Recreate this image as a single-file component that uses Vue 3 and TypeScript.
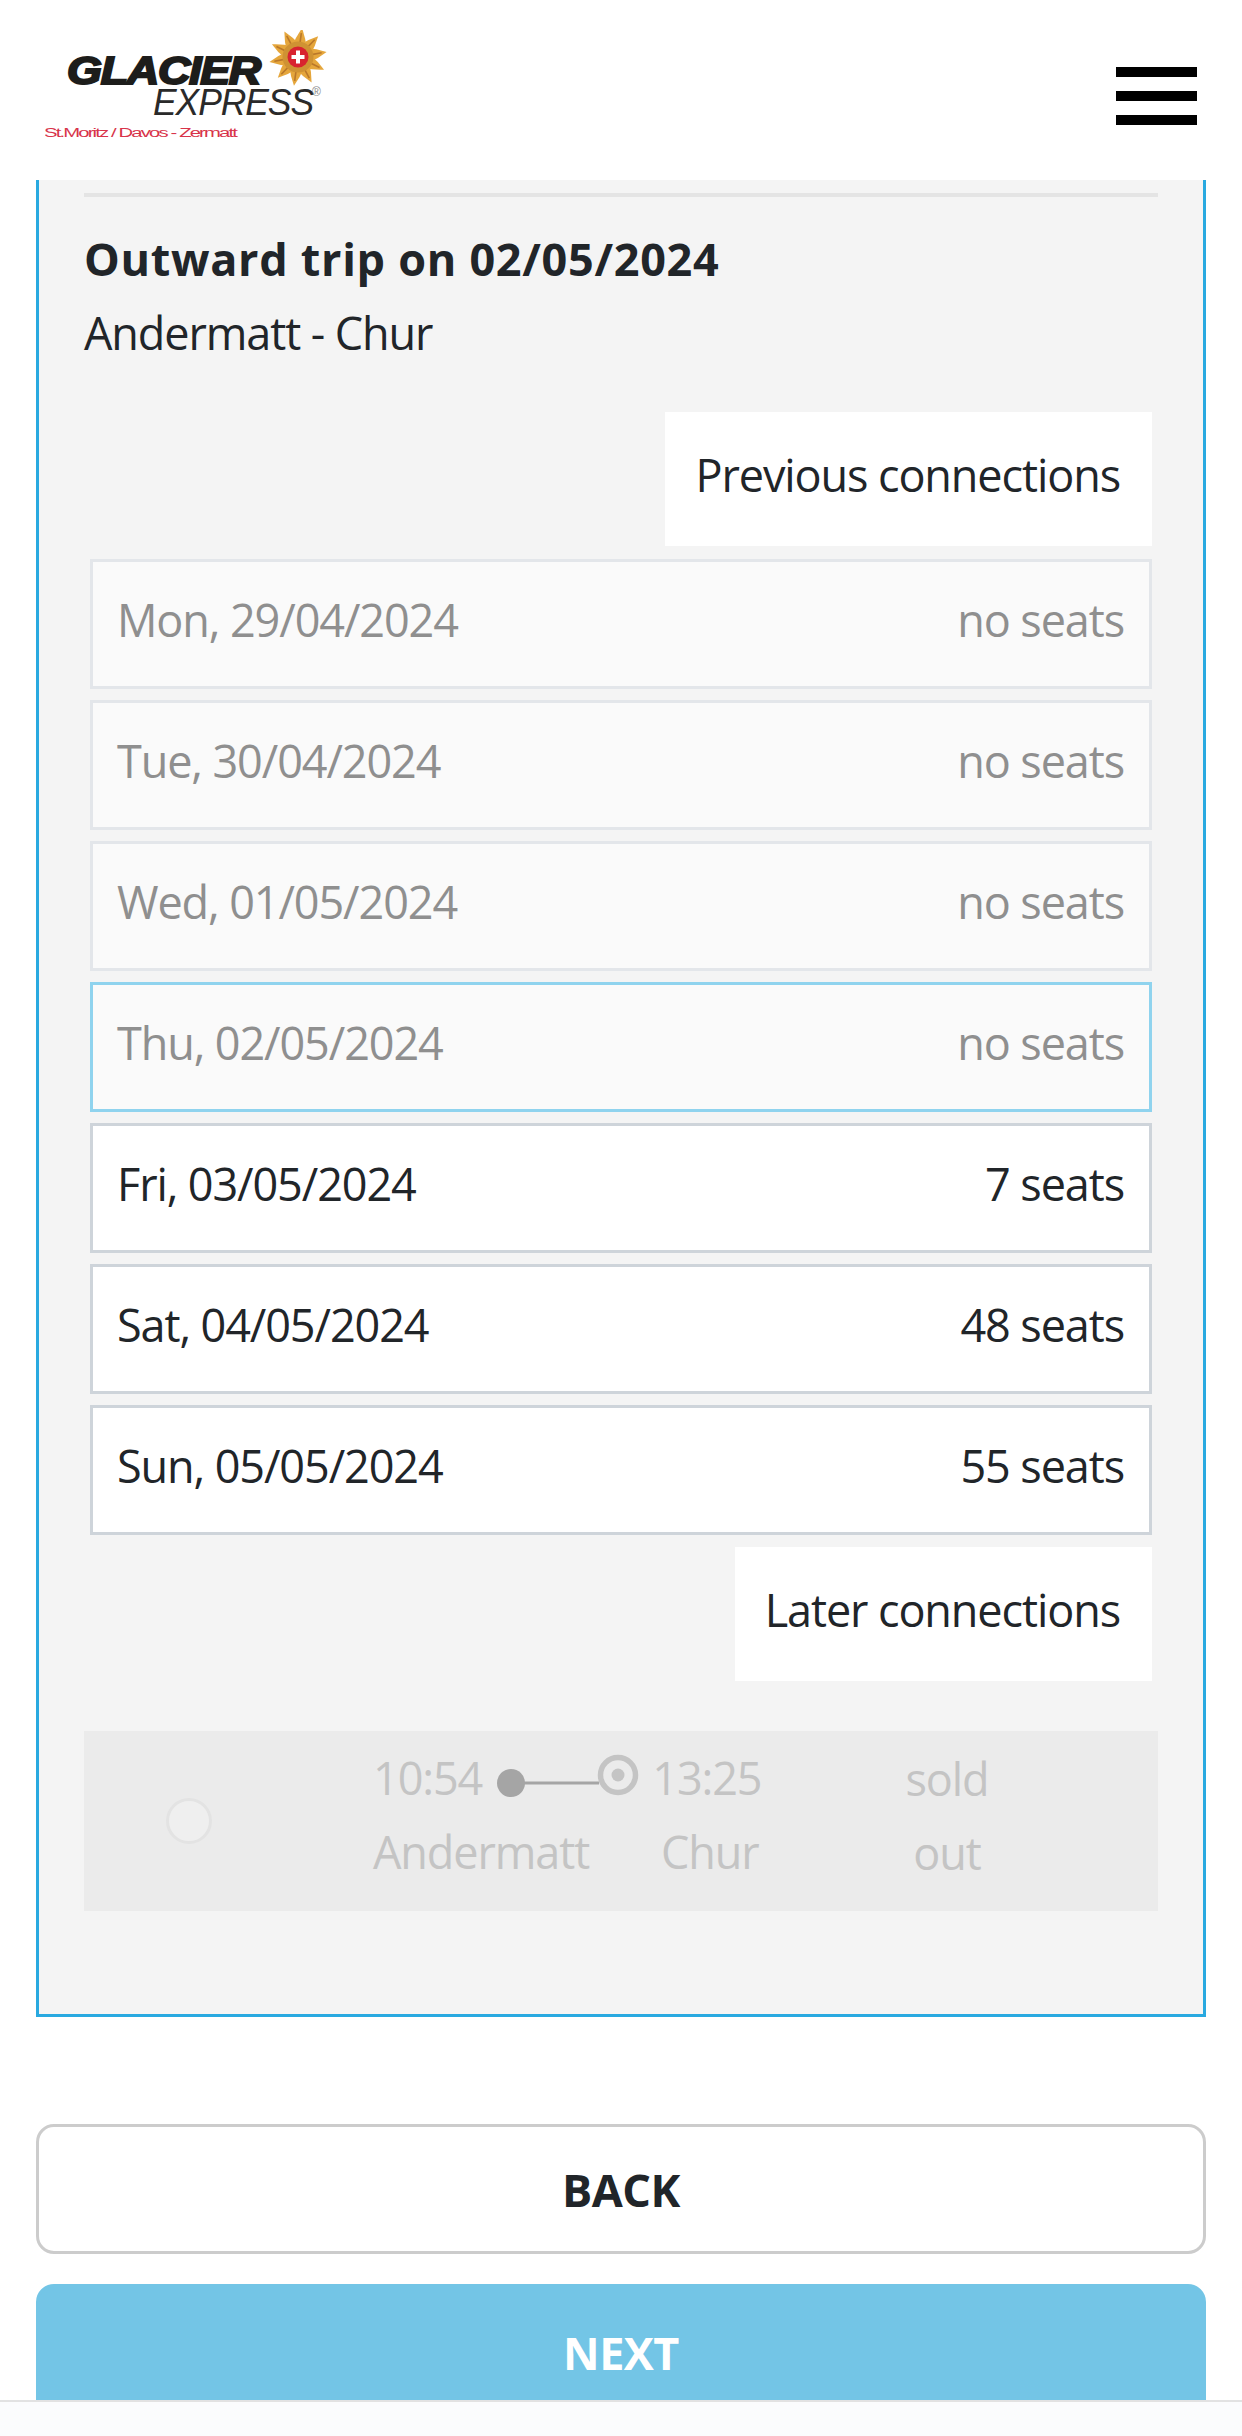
<script setup lang="ts">
interface Day {
  date: string
  seats: string
  state: 'off' | 'current' | 'on'
}

const days: Day[] = [
  { date: 'Mon, 29/04/2024', seats: 'no seats', state: 'off' },
  { date: 'Tue, 30/04/2024', seats: 'no seats', state: 'off' },
  { date: 'Wed, 01/05/2024', seats: 'no seats', state: 'off' },
  { date: 'Thu, 02/05/2024', seats: 'no seats', state: 'current' },
  { date: 'Fri, 03/05/2024', seats: '7 seats', state: 'on' },
  { date: 'Sat, 04/05/2024', seats: '48 seats', state: 'on' },
  { date: 'Sun, 05/05/2024', seats: '55 seats', state: 'on' },
]

const rays = Array.from({ length: 10 }, (_, i) => i * 36 + 8)
</script>

<template>
  <div class="page">
    <header class="header">
      <svg class="logo" width="300" height="120" viewBox="0 0 300 120">
        <text x="22" y="54" class="logo-glacier" textLength="193" lengthAdjust="spacingAndGlyphs">GLACIER</text>
        <text x="108" y="85" class="logo-express" textLength="160" lengthAdjust="spacingAndGlyphs">EXPRESS</text>
        <text x="267" y="66" class="logo-reg">®</text>
        <text x="-1" y="107" class="logo-route" textLength="192" lengthAdjust="spacingAndGlyphs">St.Moritz / Davos - Zermatt</text>
        <g transform="translate(253 27)">
          <g v-for="r in rays" :key="r" :transform="`rotate(${r})`">
            <path d="M-7.5 -9 Q-5 -20 0 -29 Q5 -20 7.5 -9 Z" fill="#e5a63c" />
            <path d="M0 -11 V-24" stroke="#b9772a" stroke-width="1.6" />
          </g>
          <circle r="15.5" fill="#cf9233" />
          <circle r="10.5" fill="#d8232f" />
          <path d="M-2 -6.5h4v4.5h4.5v4h-4.5v4.5h-4v-4.5h-4.5v-4h4.5z" fill="#fff" />
        </g>
      </svg>
      <div class="burger" aria-label="Menu">
        <span></span><span></span><span></span>
      </div>
    </header>

    <main class="panel">
      <hr class="rule" />
      <h1 class="title">Outward trip on 02/05/2024</h1>
      <p class="route">Andermatt - Chur</p>

      <div class="more more-prev"><span class="more-btn">Previous connections</span></div>

      <ul class="days">
        <li v-for="d in days" :key="d.date" class="day" :class="`day-${d.state}`">
          <span>{{ d.date }}</span>
          <span>{{ d.seats }}</span>
        </li>
      </ul>

      <div class="more more-next"><span class="more-btn">Later connections</span></div>

      <section class="conn">
        <div class="radio-cell"><span class="radio"></span></div>
        <div class="times">
          <div class="time-line">
            <span>10:54</span>
            <svg class="track" width="170" height="60" viewBox="0 0 170 60">
              <line x1="29" y1="38" x2="117" y2="38" stroke="#a5a5a5" stroke-width="3" />
              <circle cx="29" cy="38" r="14" fill="#a5a5a5" />
              <circle cx="136" cy="30" r="17.5" fill="#ebebeb" stroke="#c4c4c4" stroke-width="5.5" />
              <circle cx="136" cy="30" r="6.5" fill="#c4c4c4" />
            </svg>
            <span>13:25</span>
          </div>
          <div class="place-line">
            <span>Andermatt</span>
            <span class="place-to">Chur</span>
          </div>
        </div>
        <div class="sold">sold<br />out</div>
      </section>
    </main>

    <div class="actions">
      <button class="btn btn-back" type="button">BACK</button>
      <button class="btn btn-next" type="button">NEXT</button>
    </div>

    <div class="bottom-bar"></div>
  </div>
</template>

<style>
html,
body {
  margin: 0;
  background: #fff;
}
</style>

<style scoped>
.page {
  position: relative;
  width: 1242px;
  height: 2436px;
  overflow: hidden;
  background: #fff;
  color: #212529;
  font-family: "Open Sans", "Noto Sans", sans-serif;
  font-size: 45px;
  letter-spacing: -1.1px;
}

.header {
  height: 180px;
  box-sizing: border-box;
  display: flex;
  justify-content: space-between;
  align-items: flex-start;
  padding: 30px 45px 0 45px;
}

.logo-glacier {
  font: italic 900 38px "Liberation Sans", sans-serif;
  fill: #1d1d1b;
  stroke: #1d1d1b;
  stroke-width: 2px;
}

.logo-express {
  font: italic 400 36px "Liberation Sans", sans-serif;
  fill: #2a2a2a;
}

.logo-reg {
  font: 400 12px "Liberation Sans", sans-serif;
  fill: #888;
}

.logo-route {
  font: 400 12px "Liberation Sans", sans-serif;
  fill: #d8344a;
}

.burger {
  display: flex;
  flex-direction: column;
  gap: 14px;
  width: 81px;
  margin-top: 37px;
}

.burger span {
  height: 10px;
  background: #000;
}

.panel {
  box-sizing: border-box;
  height: 1837px;
  margin: 0 36px;
  padding: 13px 45px 0;
  background: #f4f4f4;
  border: 3px solid #29a9e0;
  border-top: 0;
}

.rule {
  height: 4px;
  margin: 0;
  border: 0;
  background: #e4e4e4;
}

.title {
  margin: 32px 0 0;
  font-size: 45px;
  line-height: 60px;
  font-weight: 700;
  letter-spacing: 0.7px;
}

.route {
  margin: 13px 0 0;
  line-height: 62px;
}

.more {
  display: flex;
  justify-content: flex-end;
  padding-right: 6px;
}

.more-prev {
  margin-top: 48px;
}

.more-next {
  margin-top: 12px;
}

.more-btn {
  background: #fff;
  height: 134px;
  padding: 29px 32px 0 30px;
  box-sizing: border-box;
  line-height: 68px;
}

.days {
  display: flex;
  flex-direction: column;
  gap: 11px;
  margin: 13px 6px 0 6px;
  padding: 0;
  list-style: none;
}

.day {
  box-sizing: border-box;
  height: 130px;
  display: flex;
  justify-content: space-between;
  padding: 24px 25px 0 24px;
  line-height: 68px;
  border: 3px solid #ced4da;
  background: #fff;
}

.day-off,
.day-current {
  color: #8f8f8f;
  background: #fafafa;
}

.day-off {
  border-color: #e3e6ea;
}

.day-current {
  border-color: #8fd3ee;
}

.conn {
  display: flex;
  height: 180px;
  margin-top: 50px;
  background: #ebebeb;
  color: #c4c4c4;
}

.radio-cell {
  width: 210px;
  display: flex;
  justify-content: center;
  align-items: center;
}

.radio {
  width: 46px;
  height: 46px;
  box-sizing: border-box;
  border-radius: 50%;
  border: 3px solid #e3e3e3;
  background: #efefef;
}

.times {
  width: 420px;
  margin-left: 79px;
  padding-top: 14px;
}

.time-line {
  display: flex;
  height: 70px;
  line-height: 66px;
}

.track {
  flex: none;
}

.place-line {
  line-height: 74px;
}

.place-to {
  margin-left: 72px;
}

.sold {
  flex: 1;
  max-width: 308px;
  padding-top: 11px;
  text-align: center;
  line-height: 74px;
}

.actions {
  display: flex;
  flex-direction: column;
  gap: 30px;
  margin: 107px 36px 0;
}

.btn {
  box-sizing: border-box;
  display: block;
  width: 100%;
  height: 130px;
  border-radius: 18px;
  font-family: "Open Sans", "Noto Sans", sans-serif;
  font-size: 45px;
  font-weight: 700;
  letter-spacing: -0.5px;
}

.btn-back {
  background: #fff;
  border: 3px solid #cccccc;
  color: #212529;
}

.btn-next {
  height: 136px;
  background: #73c5e6;
  border: 3px solid #73c5e6;
  color: #fff;
}

.bottom-bar {
  position: absolute;
  left: 0;
  right: 0;
  bottom: 0;
  height: 36px;
  background: #fbfcfd;
  border-top: 2px solid #e2e2e2;
  box-sizing: border-box;
}
</style>
